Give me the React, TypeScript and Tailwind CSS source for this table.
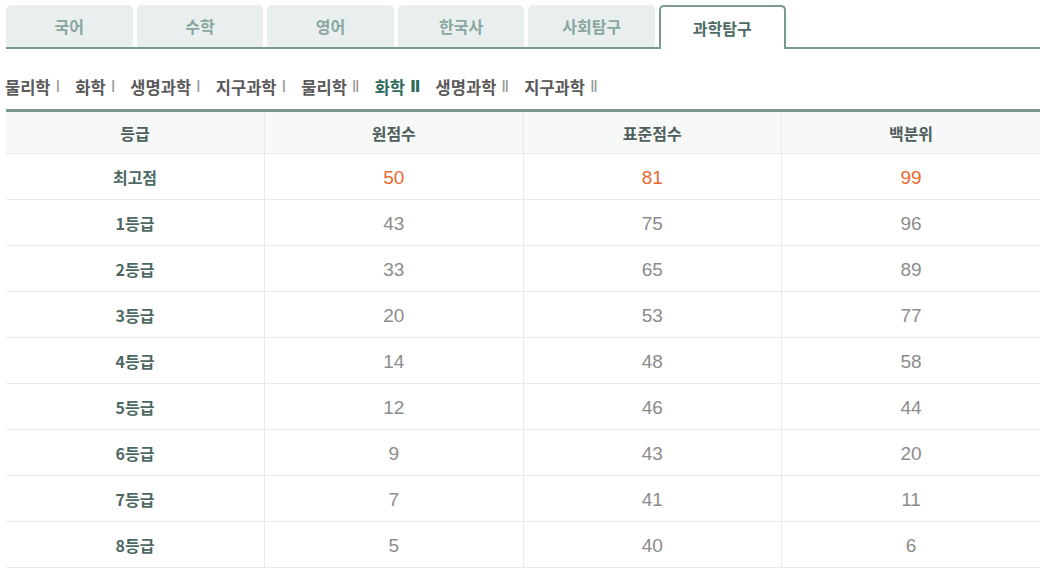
import React from "react";

const tabs = ["국어", "수학", "영어", "한국사", "사회탐구", "과학탐구"];

const subjects = [
	{ name: "물리학", num: "Ⅰ" },
	{ name: "화학", num: "Ⅰ" },
	{ name: "생명과학", num: "Ⅰ" },
	{ name: "지구과학", num: "Ⅰ" },
	{ name: "물리학", num: "Ⅱ" },
	{ name: "화학", num: "Ⅱ", active: true },
	{ name: "생명과학", num: "Ⅱ" },
	{ name: "지구과학", num: "Ⅱ" },
];

const rows = [
	{ grade: "최고점", raw: "50", std: "81", pct: "99", top: true },
	{ grade: "1등급", raw: "43", std: "75", pct: "96" },
	{ grade: "2등급", raw: "33", std: "65", pct: "89" },
	{ grade: "3등급", raw: "20", std: "53", pct: "77" },
	{ grade: "4등급", raw: "14", std: "48", pct: "58" },
	{ grade: "5등급", raw: "12", std: "46", pct: "44" },
	{ grade: "6등급", raw: "9", std: "43", pct: "20" },
	{ grade: "7등급", raw: "7", std: "41", pct: "11" },
	{ grade: "8등급", raw: "5", std: "40", pct: "6" },
];

const kr = { fontFamily: '"Noto Sans CJK KR", "Noto Sans", sans-serif' };
const num = { fontFamily: '"Liberation Sans Narrow", "Liberation Sans", sans-serif' };
const roman = { fontFamily: '"DejaVu Sans", sans-serif' };

const App = () => {
	return (
		<div className="w-[1046px] h-[574px] bg-white px-[6px] pt-[5px]" style={kr}>
			{/* subject tabs */}
			<div className="flex gap-[4px] border-b-2 border-[#7a9892] h-[44px]">
				{tabs.map((t, i) =>
					i === tabs.length - 1 ? (
						<div
							key={t}
							className="w-[126.6px] h-[44px] -mb-[2px] bg-white border-2 border-b-0 border-[#7a9892] rounded-t-[5px] flex items-center justify-center text-[16px] font-bold text-[#4d6b65]"
						>
							{t}
						</div>
					) : (
						<div
							key={t}
							className="w-[126.6px] h-[42px] bg-[#e9efee] rounded-t-[5px] flex items-center justify-center text-[16px] font-bold text-[#8aa6a0]"
						>
							{t}
						</div>
					)
				)}
			</div>

			{/* sub nav */}
			<div className="flex items-center gap-[15px] h-[60px] -ml-[1px] pt-[16px]">
				{subjects.map((s, i) => (
					<span
						key={i}
						className={
							"text-[16.5px] font-bold flex items-center " +
							(s.active ? "text-[#2f6a5d]" : "text-[#5a5a5a]")
						}
					>
						{s.name}
						<span
							className={
								"ml-[5px] text-[16px] " +
								(s.active ? "text-[#2f6a5d] font-bold" : "text-[#999999] font-normal")
							}
							style={roman}
						>
							{s.num}
						</span>
					</span>
				))}
			</div>

			{/* score table */}
			<table className="w-full table-fixed border-collapse border-t-[3px] border-[#7a9892]">
				<thead>
					<tr className="bg-[#f7f9f9] h-[43px] border-b border-[#e6ecec]">
						{["등급", "원점수", "표준점수", "백분위"].map((h, i) => (
							<th
								key={h}
								className={
									"text-[16px] font-bold text-[#4f5f5c] " +
									(i > 0 ? "border-l border-[#e6ecec]" : "")
								}
							>
								{h}
							</th>
						))}
					</tr>
				</thead>
				<tbody>
					{rows.map((r) => (
						<tr key={r.grade} className="h-[46px] border-b border-[#e6ecec]">
							<td className="text-center text-[16px] font-bold text-[#4e6964]">{r.grade}</td>
							{[r.raw, r.std, r.pct].map((v, i) => (
								<td
									key={i}
									className={
										"text-center text-[19px] pt-[3px] border-l border-[#e6ecec] " +
										(r.top ? "text-[#e8692e]" : "text-[#8c8c8c]")
									}
									style={num}
								>
									{v}
								</td>
							))}
						</tr>
					))}
				</tbody>
			</table>
		</div>
	);
};

export default App;
